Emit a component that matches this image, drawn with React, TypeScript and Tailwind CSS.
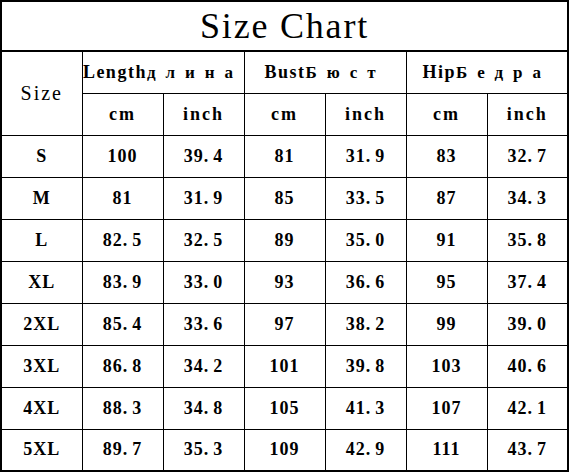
const rows = [
  ["S", "100", "39.4", "81", "31.9", "83", "32.7"],
  ["M", "81", "31.9", "85", "33.5", "87", "34.3"],
  ["L", "82.5", "32.5", "89", "35.0", "91", "35.8"],
  ["XL", "83.9", "33.0", "93", "36.6", "95", "37.4"],
  ["2XL", "85.4", "33.6", "97", "38.2", "99", "39.0"],
  ["3XL", "86.8", "34.2", "101", "39.8", "103", "40.6"],
  ["4XL", "88.3", "34.8", "105", "41.3", "107", "42.1"],
  ["5XL", "89.7", "35.3", "109", "42.9", "111", "43.7"],
];

const groups = [
  { en: "Length", ru: "длина" },
  { en: "Bust", ru: "Бюст" },
  { en: "Hip", ru: "Бедра" },
];

const cell = "border border-black p-0 text-center align-middle";

// decimal point sits in a full-width slot in the source chart
function Num({ v }: { v: string }) {
  const [a, b] = v.split(".");
  if (b === undefined) return <>{v}</>;
  return (
    <>
      {a}
      <span className="pr-[4px]">.</span>
      {b}
    </>
  );
}

export default function App() {
  return (
    <div className="w-[569px] h-[472px] bg-white text-black font-['Liberation_Serif',serif]">
      <table className="table-fixed border-collapse border-2 border-black w-[568px]">
        <colgroup>
          {Array.from({ length: 7 }).map((_, i) => (
            <col key={i} className="w-[81px]" />
          ))}
        </colgroup>
        <tbody>
          <tr className="h-[50px]">
            <td colSpan={7} className={`${cell} border-b-2 text-[36px] tracking-[1.8px] leading-none`}>
              Size Chart
            </td>
          </tr>
          <tr className="h-[42px]">
            <td rowSpan={2} className={`${cell} text-[20px] tracking-[2px]`}>
              Size
            </td>
            {groups.map((g) => (
              <td key={g.en} colSpan={2} className={`${cell} font-bold text-[18px] whitespace-nowrap`}>
                <span className="tracking-[1.5px]">{g.en}</span>
                <span className="tracking-[10px] text-[17px]">{g.ru}</span>
              </td>
            ))}
          </tr>
          <tr className="h-[42px]">
            {groups.map((g) => [
              <td key={g.en + "cm"} className={`${cell} font-bold text-[18px] tracking-[2px]`}>
                cm
              </td>,
              <td key={g.en + "in"} className={`${cell} font-bold text-[18px] tracking-[2px]`}>
                inch
              </td>,
            ])}
          </tr>
          {rows.map((r) => (
            <tr key={r[0]} className="h-[42px]">
              {r.map((v, i) => (
                <td key={i} className={`${cell} font-bold text-[18px] tracking-[1px]`}>
                  <Num v={v} />
                </td>
              ))}
            </tr>
          ))}
        </tbody>
      </table>
    </div>
  );
}
